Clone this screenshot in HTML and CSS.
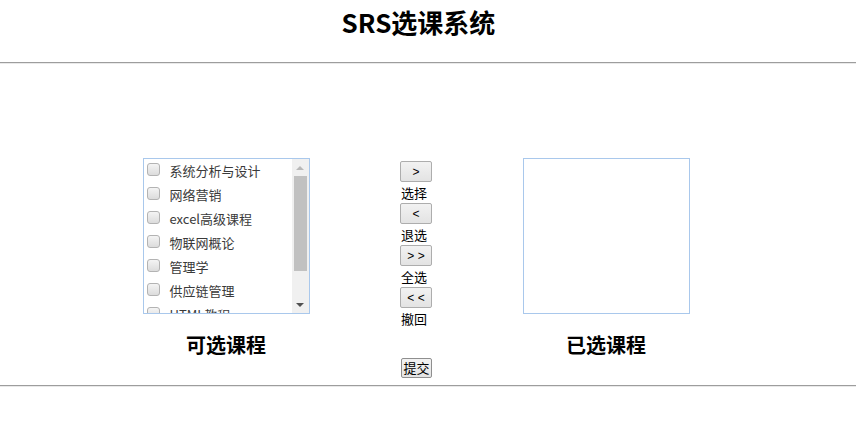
FILE: index.html
```html
<!DOCTYPE html>
<html lang="zh-CN">
<head>
<meta charset="utf-8">
<title>SRS选课系统</title>
<link rel="stylesheet" href="styles.css">
</head>
<body>
<header class="header"><h2 class="title">SRS选课系统</h2></header>
<hr class="rule">
<main class="board">
  <div class="listbox">
    <ul class="courses">
      <li class="course"><span class="check"></span><span class="cname">系统分析与设计</span></li>
      <li class="course"><span class="check"></span><span class="cname">网络营销</span></li>
      <li class="course"><span class="check"></span><span class="cname">excel高级课程</span></li>
      <li class="course"><span class="check"></span><span class="cname">物联网概论</span></li>
      <li class="course"><span class="check"></span><span class="cname">管理学</span></li>
      <li class="course"><span class="check"></span><span class="cname">供应链管理</span></li>
      <li class="course"><span class="check"></span><span class="cname">HTML教程</span></li>
    </ul>
    <div class="scrollbar">
      <span class="arrow up"></span>
      <span class="track"><span class="thumb"></span></span>
      <span class="arrow down"></span>
    </div>
  </div>
  <div class="controls">
    <button class="btn" type="button">&gt;</button>
    <span class="ctl-label">选择</span>
    <button class="btn" type="button">&lt;</button>
    <span class="ctl-label">退选</span>
    <button class="btn" type="button">&gt; &gt;</button>
    <span class="ctl-label">全选</span>
    <button class="btn" type="button">&lt; &lt;</button>
    <span class="ctl-label">撤回</span>
  </div>
  <div class="listbox empty"></div>
  <h3 class="caption">可选课程</h3>
  <div class="spacer"></div>
  <h3 class="caption">已选课程</h3>
  <div></div>
  <div class="submit-cell"><button class="submit" type="button">提交</button></div>
  <div></div>
</main>
<hr class="rule bottom">
</body>
</html>
```
FILE: styles.css
```css
* { box-sizing: border-box; }
html, body { margin: 0; padding: 0; background: #fff; }
body {
  font-family: "Noto Sans CJK SC", "Noto Sans", sans-serif;
  color: #000;
  width: 856px;
}
.header {
  height: 62px;
  display: flex;
  justify-content: center;
  padding-right: 19px;
}
.title {
  margin: 0;
  padding-top: 6px;
  font-size: 26px;
  line-height: 32px;
  font-weight: 700;
}
.rule {
  margin: 0;
  height: 2px;
  border: 0;
  border-top: 1px solid #9d9d9d;
  border-bottom: 1px solid #e9e9e9;
}
.rule.bottom { margin-top: 6px; }
.board {
  display: grid;
  grid-template-columns: 190px 190px 190px;
  grid-template-rows: 156px 44px 21px;
  justify-content: center;
  padding-right: 24px;
  margin-top: 94px;
}
.listbox {
  justify-self: center;
  width: 167px;
  height: 156px;
  border: 1px solid #a9c8ec;
  display: flex;
  overflow: hidden;
  background: #fff;
}
.courses {
  list-style: none;
  margin: 0;
  padding: 0 0 0 3px;
  flex: 1;
  overflow: hidden;
}
.course {
  display: flex;
  align-items: flex-start;
  height: 24px;
}
.check {
  width: 13px;
  height: 13px;
  margin-top: 4px;
  border: 1px solid #b3b3b3;
  border-radius: 3px;
  background: linear-gradient(#f4f4f4, #dcdcdc);
  flex: none;
}
.cname {
  margin-left: 10px;
  font-size: 13px;
  line-height: 24px;
  color: #3a3a3a;
  white-space: nowrap;
}
.scrollbar {
  width: 17px;
  background: #f0f0f0;
  display: flex;
  flex-direction: column;
  align-items: center;
  flex: none;
}
.arrow {
  width: 0;
  height: 0;
  border-left: 4px solid transparent;
  border-right: 4px solid transparent;
  flex: none;
}
.arrow.up {
  margin-top: 7px;
  border-bottom: 4px solid #b8b8b8;
}
.arrow.down {
  margin-bottom: 6px;
  border-top: 4px solid #505050;
}
.track {
  flex: 1;
  width: 100%;
  padding: 6px 2px 0;
}
.thumb {
  display: block;
  height: 95px;
  background: #c1c1c1;
}
.controls {
  justify-self: center;
  width: 32px;
  padding-top: 3px;
  display: flex;
  flex-direction: column;
  align-items: flex-start;
}
.btn {
  flex: none;
  width: 32px;
  height: 21px;
  margin: 0;
  padding: 0;
  border: 1px solid #adadad;
  border-radius: 2px;
  background: linear-gradient(#f2f2f2, #e3e3e3);
  font-family: "Liberation Sans", sans-serif;
  font-size: 12px;
  color: #000;
}
.ctl-label {
  flex: none;
  height: 21px;
  line-height: 21px;
  font-size: 13px;
  padding-left: 1px;
  white-space: nowrap;
}
.caption {
  margin: 0;
  padding-top: 17px;
  text-align: center;
  font-size: 20px;
  line-height: 28px;
  font-weight: 700;
}
.submit-cell {
  display: flex;
  justify-content: center;
  padding-left: 1px;
}
.submit {
  width: 31px;
  height: 20px;
  margin: 0;
  padding: 0;
  border: 1px solid #8f8f8f;
  border-radius: 2px;
  background: linear-gradient(#f3f3f3, #e4e4e4);
  font-family: "Noto Sans CJK SC", sans-serif;
  font-size: 13px;
  line-height: 18px;
  color: #000;
}
```
